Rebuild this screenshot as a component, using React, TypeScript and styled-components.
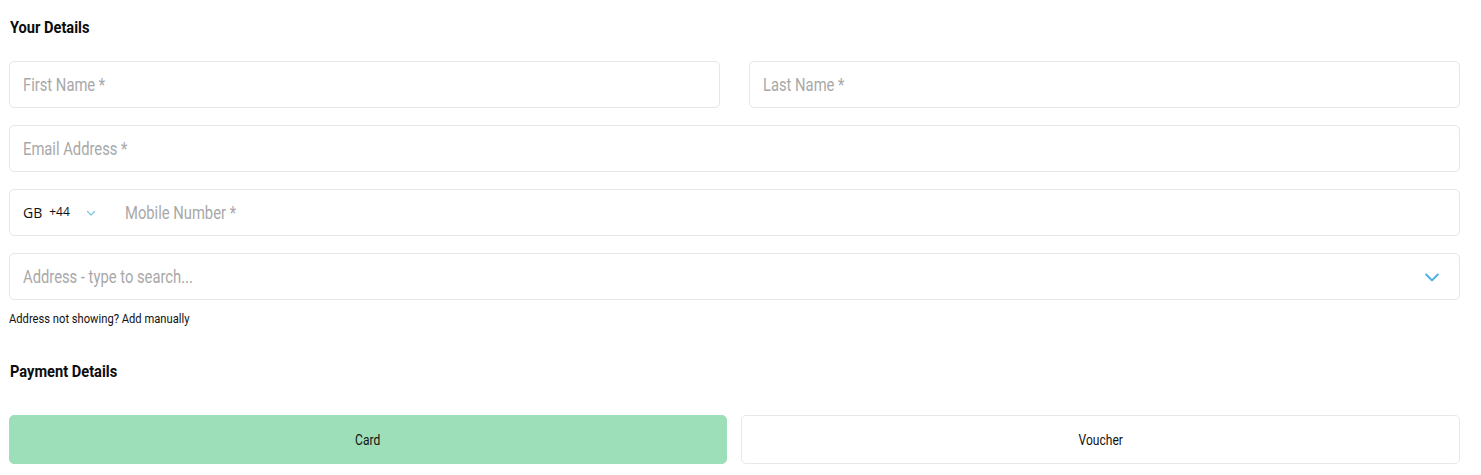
import React from 'react'
import styled, { createGlobalStyle } from 'styled-components'

const GlobalStyle = createGlobalStyle`
  body {
    margin: 0;
    background: #ffffff;
    font-family: 'Roboto', 'Liberation Sans', sans-serif;
    color: #111111;
  }
`

const Page = styled.div`
  width: 1451px;
  padding: 12px 0 0 9px;
`

// the design uses a condensed face; squeeze Roboto to its width
const Narrow = styled.span<{ $origin?: string; $scale?: number }>`
  display: inline-block;
  white-space: nowrap;
  transform: scaleX(${(p) => p.$scale ?? 0.86});
  transform-origin: ${(p) => p.$origin ?? 'left center'};
`

const Heading = styled.h3`
  margin: 0 0 0 1px;
  font-size: 17px;
  font-weight: 700;
  line-height: 30px;
  color: #0d0d0d;
`

const Fields = styled.div`
  display: grid;
  grid-template-columns: 1fr 1fr;
  column-gap: 29px;
  row-gap: 17px;
  margin-top: 19px;
`

const Field = styled.div<{ $wide?: boolean }>`
  grid-column: ${(p) => (p.$wide ? '1 / -1' : 'auto')};
  height: 47px;
  box-sizing: border-box;
  border: 1px solid #e6e6e6;
  border-radius: 5px;
  display: flex;
  align-items: center;
  padding: 0 17px 0 13px;
`

const Placeholder = styled.span`
  flex: 1;
  font-size: 18px;
  color: #a8a8a8;
`

const Country = styled.div`
  display: flex;
  align-items: center;
  width: 102px;
  font-family: 'Open Sans', 'Noto Sans', sans-serif;
  color: #111111;
`

const Code = styled.span`
  font-size: 14px;
  margin-right: 7px;
`

const Dial = styled.span`
  font-size: 12px;
  margin-right: 15px;
  position: relative;
  top: -1px;
`

const Hint = styled.div`
  font-size: 13px;
  margin: 11px 0 0 0;
  color: #111111;
`

const Section = styled(Heading)`
  margin-top: 30px;
`

const Choices = styled.div`
  display: grid;
  grid-template-columns: 718px 1fr;
  column-gap: 14px;
  margin-top: 29px;
`

const Choice = styled.button<{ $active?: boolean }>`
  height: 49px;
  border-radius: 5px;
  border: 1px solid ${(p) => (p.$active ? '#9ddfb8' : '#e8e8e8')};
  background: ${(p) => (p.$active ? '#9ddfb8' : '#ffffff')};
  font-family: inherit;
  font-size: 14px;
  color: #111111;
  cursor: pointer;
`

const Chevron = ({ size, color }: { size: number; color: string }) => (
  <svg width={size} height={size} viewBox="0 0 24 24" fill="none" stroke={color} strokeWidth={2.4} strokeLinecap="round" strokeLinejoin="round">
    <path d="M5 9l7 7 7-7" />
  </svg>
)

export default function App() {
  return (
    <Page>
      <GlobalStyle />
      <Heading>
        <Narrow>Your Details</Narrow>
      </Heading>
      <Fields>
        <Field>
          <Placeholder>
            <Narrow $scale={0.82}>First Name *</Narrow>
          </Placeholder>
        </Field>
        <Field>
          <Placeholder>
            <Narrow $scale={0.82}>Last Name *</Narrow>
          </Placeholder>
        </Field>
        <Field $wide>
          <Placeholder>
            <Narrow $scale={0.82}>Email Address *</Narrow>
          </Placeholder>
        </Field>
        <Field $wide>
          <Country>
            <Code>GB</Code>
            <Dial>+44</Dial>
            <Chevron size={12} color="#7cc4e8" />
          </Country>
          <Placeholder>
            <Narrow $scale={0.82}>Mobile Number *</Narrow>
          </Placeholder>
        </Field>
        <Field $wide>
          <Placeholder>
            <Narrow $scale={0.82}>Address - type to search...</Narrow>
          </Placeholder>
          <Chevron size={20} color="#4fb0e3" />
        </Field>
      </Fields>
      <Hint>
        <Narrow>Address not showing? Add manually</Narrow>
      </Hint>
      <Section>
        <Narrow>Payment Details</Narrow>
      </Section>
      <Choices>
        <Choice $active>
          <Narrow $origin="center">Card</Narrow>
        </Choice>
        <Choice>
          <Narrow $origin="center">Voucher</Narrow>
        </Choice>
      </Choices>
    </Page>
  )
}
